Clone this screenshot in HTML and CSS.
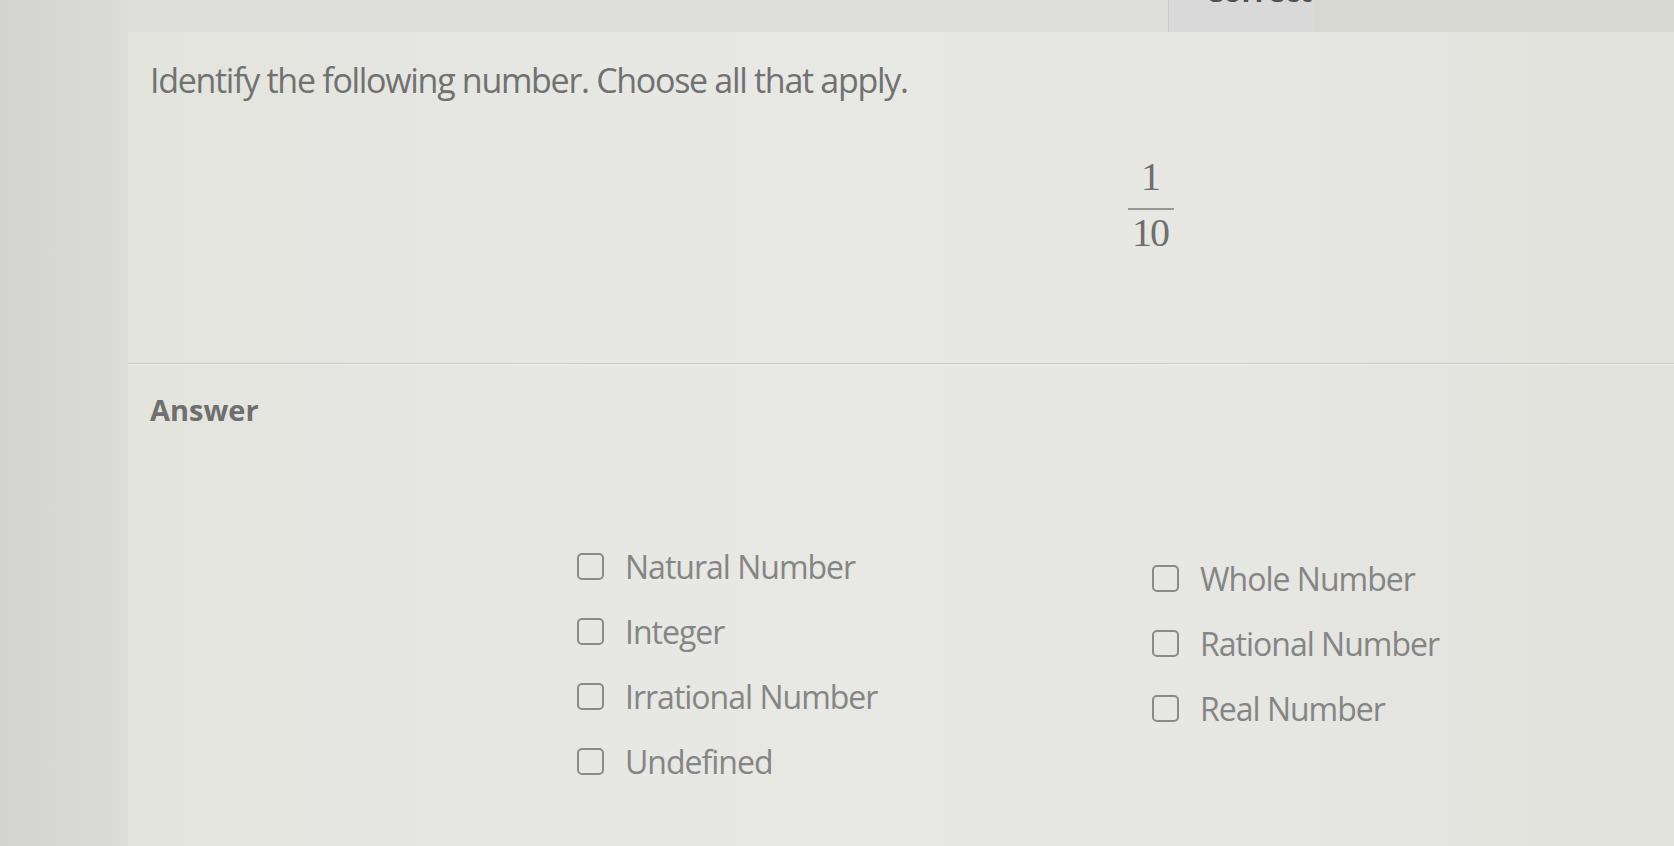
FILE: index.html
```html
<!DOCTYPE html>
<html lang="en">
<head>
<meta charset="utf-8">
<title>Identify the following number</title>
<link rel="stylesheet" href="styles.css">
</head>
<body>
<div class="page">
  <div class="gutter"></div>
  <div class="main">
    <div class="topbar">
      <div class="topbar-fill"></div>
      <div class="tab"><span class="tab-text">Correct</span></div>
      <div class="topbar-rest"></div>
    </div>
    <div class="card">
      <section class="question">
        <p class="prompt">Identify the following number. Choose all that apply.</p>
        <div class="fraction-wrap">
          <div class="fraction">
            <span class="num">1</span>
            <span class="bar"></span>
            <span class="den">10</span>
          </div>
        </div>
      </section>
      <hr class="divider">
      <section class="answer">
        <h2 class="answer-title">Answer</h2>
        <div class="options">
          <div class="col col-left">
            <label class="opt"><span class="box"></span><span class="opt-text">Natural Number</span></label>
            <label class="opt"><span class="box"></span><span class="opt-text">Integer</span></label>
            <label class="opt"><span class="box"></span><span class="opt-text">Irrational Number</span></label>
            <label class="opt"><span class="box"></span><span class="opt-text">Undefined</span></label>
          </div>
          <div class="col col-right">
            <label class="opt"><span class="box"></span><span class="opt-text">Whole Number</span></label>
            <label class="opt"><span class="box"></span><span class="opt-text">Rational Number</span></label>
            <label class="opt"><span class="box"></span><span class="opt-text">Real Number</span></label>
          </div>
        </div>
      </section>
    </div>
  </div>
</div>
</body>
</html>
```

FILE: styles.css
```css
* { box-sizing: border-box; }

html, body {
  margin: 0;
  padding: 0;
  height: 100%;
}

body {
  background: #d8d9d5;
  font-family: "Open Sans", "Noto Sans", sans-serif;
  overflow: hidden;
}

.page {
  display: flex;
  width: 1674px;
  height: 846px;
}

.gutter {
  width: 128px;
  flex: none;
  background: linear-gradient(90deg, #d3d4d0 0%, #d9dad6 70%, #dcdcd8 100%);
}

.main {
  flex: 1;
  min-width: 0;
  display: flex;
  flex-direction: column;
}

.topbar {
  height: 32px;
  display: flex;
  flex: none;
}

.topbar-fill {
  width: 1040px;
  flex: none;
  background: #dfdfdd;
}

.tab {
  width: 146px;
  flex: none;
  background: #d9d9d9;
  border-left: 1px solid #cbcbc9;
  overflow: hidden;
  display: flex;
  padding-left: 36px;
}

.tab-text {
  font-weight: 700;
  font-size: 29px;
  color: #505050;
  line-height: 30px;
  margin-top: -24px;
  white-space: nowrap;
}

.topbar-rest {
  flex: 1;
  background: #d8d8d2;
}

.card {
  flex: 1;
  background: linear-gradient(90deg, #e4e4df 0%, #e8e8e5 45%, #e6e6e2 75%, #e1e2dc 100%);
}

.question {
  padding: 26px 0 0 22px;
}

.prompt {
  margin: 0;
  font-size: 34px;
  line-height: 45px;
  letter-spacing: -1.3px;
  color: #717171;
}

.fraction-wrap {
  display: flex;
  padding-left: 978px;
  margin-top: 54px;
}

.fraction {
  display: flex;
  flex-direction: column;
  align-items: center;
  font-family: "Liberation Serif", "Times New Roman", serif;
  font-size: 40px;
  line-height: 40px;
  color: #6e6e6e;
}

.num {
  display: block;
}

.bar {
  display: block;
  width: 46px;
  height: 2px;
  background: #979797;
  margin-top: 11px;
}

.den {
  display: block;
  letter-spacing: -2px;
  margin-top: 3px;
  padding-right: 2px;
}

.divider {
  margin: 110px 0 0 0;
  border: none;
  height: 1px;
  background: #c8c8c4;
  box-shadow: 0 1px 0 #efefec;
}

.answer {
  padding: 26px 0 0 22px;
}

.answer-title {
  margin: 0;
  font-size: 29px;
  line-height: 40px;
  font-weight: 700;
  color: #6f6f6f;
}

.options {
  display: flex;
  margin-top: 104px;
  padding-left: 427px;
}

.col {
  display: flex;
  flex-direction: column;
}

.col-left {
  width: 575px;
  flex: none;
}

.col-right {
  flex: 1;
  margin-top: 12px;
}

.opt {
  height: 65px;
  display: flex;
  align-items: center;
  gap: 21px;
}

.box {
  width: 27px;
  height: 27px;
  flex: none;
  border: 2.5px solid #8a8a8a;
  border-radius: 5px;
}

.opt-text {
  font-size: 32px;
  letter-spacing: -1px;
  color: #858585;
}
```
